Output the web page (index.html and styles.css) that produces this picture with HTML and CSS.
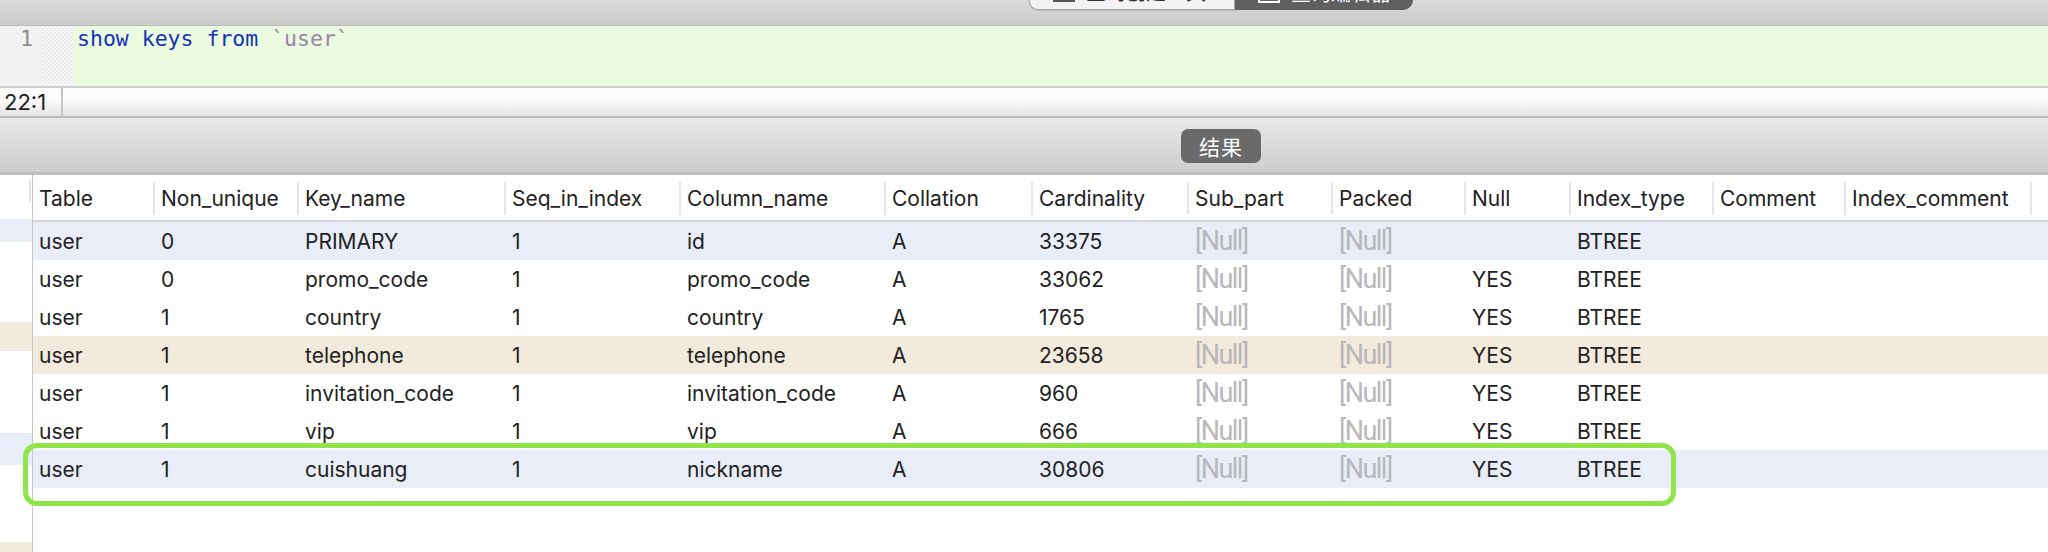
FILE: index.html
```html
<!DOCTYPE html>
<html lang="zh">
<head>
<meta charset="utf-8">
<title>show keys</title>
<link rel="stylesheet" href="styles.css">
</head>
<body>
<div class="app">
  <div class="toolbar">
    <div class="seg">
      <div class="seg-btn seg-light">
        <svg class="seg-ico" width="24" height="24" viewBox="0 0 24 24"><rect x="2" y="2" width="20" height="20" fill="none" stroke="#555" stroke-width="2"/></svg>
        <span class="seg-txt">查询创建工具</span>
      </div>
      <div class="seg-btn seg-dark">
        <svg class="seg-ico" width="24" height="24" viewBox="0 0 24 24"><rect x="2" y="2" width="20" height="20" fill="none" stroke="#fff" stroke-width="2"/></svg>
        <span class="seg-txt">查询编辑器</span>
      </div>
    </div>
  </div>

  <div class="editor">
    <div class="gutter">1</div>
    <div class="fold"></div>
    <div class="code"><span class="kw">show keys from</span> <span class="ident">`user`</span></div>
  </div>

  <div class="status">
    <div class="pos">22:1</div>
    <div class="status-rest"></div>
  </div>

  <div class="tabbar">
    <div class="tab">结果</div>
  </div>

  <div class="results">
    <div class="side">
      <div class="side-head"><span class="side-sep"></span></div>
      <div class="side-gap g1"></div>
      <div class="side-row blue h1"></div>
      <div class="side-gap g2"></div>
      <div class="side-row tan h2"></div>
      <div class="side-gap g3"></div>
      <div class="side-row blue h3"></div>
      <div class="side-gap g4"></div>
      <div class="side-row tan h4"></div>
    </div>

    <div class="grid">
      <div class="hrow">
        <div class="hc">Table</div>
        <div class="hc">Non_unique</div>
        <div class="hc">Key_name</div>
        <div class="hc">Seq_in_index</div>
        <div class="hc">Column_name</div>
        <div class="hc">Collation</div>
        <div class="hc">Cardinality</div>
        <div class="hc">Sub_part</div>
        <div class="hc">Packed</div>
        <div class="hc">Null</div>
        <div class="hc">Index_type</div>
        <div class="hc">Comment</div>
        <div class="hc">Index_comment</div>
        <div class="hc-rest"></div>
      </div>

      <div class="row blue">
        <div class="c">user</div><div class="c">0</div><div class="c">PRIMARY</div><div class="c">1</div><div class="c">id</div><div class="c">A</div><div class="c">33375</div><div class="c null">[Null]</div><div class="c null">[Null]</div><div class="c"></div><div class="c">BTREE</div><div class="c"></div><div class="c"></div><div class="c"></div>
      </div>
      <div class="row">
        <div class="c">user</div><div class="c">0</div><div class="c">promo_code</div><div class="c">1</div><div class="c">promo_code</div><div class="c">A</div><div class="c">33062</div><div class="c null">[Null]</div><div class="c null">[Null]</div><div class="c">YES</div><div class="c">BTREE</div><div class="c"></div><div class="c"></div><div class="c"></div>
      </div>
      <div class="row">
        <div class="c">user</div><div class="c">1</div><div class="c">country</div><div class="c">1</div><div class="c">country</div><div class="c">A</div><div class="c">1765</div><div class="c null">[Null]</div><div class="c null">[Null]</div><div class="c">YES</div><div class="c">BTREE</div><div class="c"></div><div class="c"></div><div class="c"></div>
      </div>
      <div class="row tan">
        <div class="c">user</div><div class="c">1</div><div class="c">telephone</div><div class="c">1</div><div class="c">telephone</div><div class="c">A</div><div class="c">23658</div><div class="c null">[Null]</div><div class="c null">[Null]</div><div class="c">YES</div><div class="c">BTREE</div><div class="c"></div><div class="c"></div><div class="c"></div>
      </div>
      <div class="row">
        <div class="c">user</div><div class="c">1</div><div class="c">invitation_code</div><div class="c">1</div><div class="c">invitation_code</div><div class="c">A</div><div class="c">960</div><div class="c null">[Null]</div><div class="c null">[Null]</div><div class="c">YES</div><div class="c">BTREE</div><div class="c"></div><div class="c"></div><div class="c"></div>
      </div>
      <div class="row">
        <div class="c">user</div><div class="c">1</div><div class="c">vip</div><div class="c">1</div><div class="c">vip</div><div class="c">A</div><div class="c">666</div><div class="c null">[Null]</div><div class="c null">[Null]</div><div class="c">YES</div><div class="c">BTREE</div><div class="c"></div><div class="c"></div><div class="c"></div>
      </div>
      <div class="row blue">
        <div class="c">user</div><div class="c">1</div><div class="c">cuishuang</div><div class="c">1</div><div class="c">nickname</div><div class="c">A</div><div class="c">30806</div><div class="c null">[Null]</div><div class="c null">[Null]</div><div class="c">YES</div><div class="c">BTREE</div><div class="c"></div><div class="c"></div><div class="c"></div>
      </div>
    </div>

    <div class="highlight"></div>
  </div>
</div>
</body>
</html>
```

FILE: styles.css
```css
* { box-sizing: border-box; }
html, body { margin: 0; padding: 0; }
body {
  width: 2048px;
  height: 552px;
  overflow: hidden;
  background: #ffffff;
  font-family: Inter, "Noto Sans", "Noto Sans CJK SC", sans-serif;
}
.app { display: flex; flex-direction: column; width: 2048px; height: 552px; }

/* top toolbar */
.toolbar {
  height: 26px;
  flex: none;
  background: linear-gradient(#d9d9d9, #cbcbcb);
  border-bottom: 1px solid #bcbcbc;
  padding-left: 1029px;
}
.seg { display: flex; height: 10px; }
.seg-btn {
  display: flex;
  align-items: flex-end;
  gap: 10px;
  height: 10px;
  overflow: hidden;
  font-family: "Noto Sans CJK SC", sans-serif;
  font-size: 20px;
}
.seg-light {
  width: 206px;
  padding-left: 22px;
  background: #f3f3f3;
  border: 1px solid #a9a9a9;
  border-top: none;
  border-radius: 0 0 0 9px;
  color: #333;
  box-shadow: 0 1px 0 #b9b9b9;
}
.seg-dark {
  width: 178px;
  padding-left: 22px;
  background: #5f5f5f;
  border-radius: 0 0 10px 0;
  color: #fff;
}
.seg-ico { flex: none; margin-bottom: 6px; }
.seg-txt { line-height: 24px; height: 24px; margin-bottom: 5px; white-space: nowrap; }

/* editor */
.editor {
  height: 60px;
  flex: none;
  display: flex;
  background: #eafbdf;
}
.gutter {
  width: 42px;
  background: #f1f1f1;
  color: #8c8c8c;
  font-family: "DejaVu Sans Mono", monospace;
  font-size: 21px;
  line-height: 26px;
  padding-right: 9px;
  text-align: right;
}
.fold {
  width: 31px;
  background: repeating-conic-gradient(#ececec 0 25%, #f7f7f7 0 50%) 0 0 / 4px 4px;
}
.code {
  flex: 1;
  padding-left: 4px;
  font-family: "DejaVu Sans Mono", monospace;
  font-size: 21.5px;
  line-height: 26px;
  white-space: pre;
}
.kw { color: #1631b4; }
.ident { color: #9a84a6; }

/* status bar */
.status {
  height: 32px;
  flex: none;
  display: flex;
  border-top: 2px solid #cfcfcf;
  border-bottom: 2px solid #bbbbbb;
  background: linear-gradient(#fdfdfd 0%, #fbfbfb 45%, #e3e3e3 100%);
}
.pos {
  width: 63px;
  border-right: 2px solid #c4c4c4;
  font-family: Inter, sans-serif;
  font-size: 22px;
  line-height: 28px;
  color: #1e1e1e;
  padding-left: 4px;
}
.status-rest { flex: 1; }

/* results tab bar */
.tabbar {
  height: 57px;
  flex: none;
  background: linear-gradient(#e9e9e9, #cdcdcd);
  border-bottom: 3px solid #bdbdbd;
  padding: 11px 0 0 1181px;
}
.tab {
  width: 80px;
  height: 34px;
  border-radius: 7px;
  background: #6a6a6a;
  color: #ffffff;
  font-family: "Noto Sans CJK SC", sans-serif;
  font-size: 21px;
  line-height: 34px;
  text-align: center;
  letter-spacing: 1px;
}

/* results */
.results {
  position: relative;
  flex: 1;
  display: flex;
  min-height: 0;
}
.side {
  width: 33px;
  flex: none;
  border-right: 1px solid #c8c8c8;
  display: flex;
  flex-direction: column;
}
.side-head { height: 30px; display: flex; justify-content: flex-end; padding-top: 5px; }
.side-sep { width: 2px; height: 22px; background: #e3e3e3; margin-right: 1px; }
.side-row.blue { background: #e9edf8; }
.side-row.tan { background: #f2eadc; }
.g1 { height: 15px; }
.h1 { height: 23px; }
.g2 { height: 81px; }
.h2 { height: 30px; }
.g3 { height: 83px; }
.h3 { height: 33px; }
.g4 { height: 78px; }
.h4 { height: 10px; }

.grid { flex: 1; display: flex; flex-direction: column; }

.hrow, .row {
  display: grid;
  grid-template-columns: 122px 144px 207px 175px 205px 147px 156px 144px 133px 105px 143px 132px 186px 1fr;
}
.hrow {
  height: 47px;
  border-bottom: 2px solid #d6d6d6;
  padding: 7px 0 5px;
}
.hc {
  border-right: 2px solid #e6e6e6;
  padding-left: 6px;
  display: flex;
  align-items: center;
  font-size: 21px;
  color: #222;
  white-space: nowrap;
}

.row { height: 38px; align-items: center; }
.row.blue { background: #e9edf8; }
.row.tan { background: #f2eadc; }
.c {
  padding-left: 6px;
  font-size: 21px;
  color: #222;
  white-space: nowrap;
}
.c.null {
  font-family: Roboto, sans-serif;
  font-weight: 400;
  font-size: 27px;
  color: #b8b8b8;
  letter-spacing: -1.5px;
}

.highlight {
  position: absolute;
  left: 23px;
  top: 268px;
  width: 1653px;
  height: 63px;
  border: 5px solid #8fe547;
  border-radius: 14px;
  pointer-events: none;
}
```
